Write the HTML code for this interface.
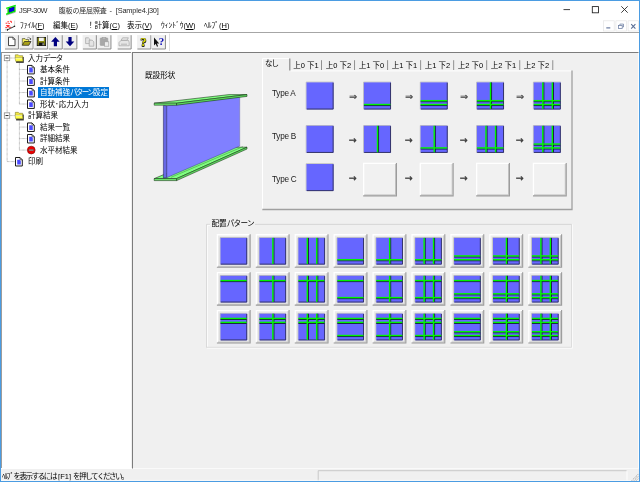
<!DOCTYPE html>
<html lang="ja"><head><meta charset="utf-8"><title>JSP-30W 腹板の座屈照査 - [Sample4.j30]</title>
<style>
*{box-sizing:border-box}
html,body{margin:0;padding:0}
body{width:640px;height:482px;overflow:hidden;background:#fff;position:relative;font-family:"Liberation Sans","Noto Sans CJK JP",sans-serif;font-size:7.5px;color:#000}
.a{position:absolute}
.t{position:absolute;white-space:nowrap;line-height:10px;height:10px;will-change:transform}
svg{position:absolute;left:0;top:0;overflow:visible}
#win{position:absolute;left:0;top:0;width:640px;height:482px;border:1px solid #4b9ce2;background:#fff}
#title{left:1px;top:1px;width:638px;height:19px;background:#fff}
#menu{left:1px;top:20px;width:638px;height:12px;background:#fff}
#menuline{left:1px;top:32px;width:638px;height:1px;background:#a6a6a6}
#tool{left:1px;top:33px;width:638px;height:19px;background:#fff}
#tree{left:1px;top:52px;width:130px;height:416px;background:#fff;border-top:1px solid #8e8e8e;border-left:1px solid #9c9c9c}
#split{left:131px;top:52px;width:2px;height:416px;background:#f0f0f0}
#view{left:132px;top:52px;width:507px;height:417px;background:#f0f0f0;border-top:1px solid #7c7c7c;border-left:1px solid #7c7c7c;border-right:1px solid #fcfcfc;border-bottom:1px solid #fafafa}
#status{left:1px;top:469px;width:638px;height:12px;background:#f0f0f0}
.sel{background:#0078d7;color:#fff}
.arr{font-family:"DejaVu Sans",sans-serif;font-weight:bold;font-size:9.4px;color:#383838;width:10px;text-align:center;-webkit-text-stroke:0.25px #383838}
</style></head>
<body>
<div id="win">
<div class="a" id="root" style="left:-1px;top:-1px;width:640px;height:482px">
<div class="a" id="title"><svg width="20" height="19" viewBox="1 1 20 19"><polygon points="8.9,8.3 14.3,6.6 14.3,11.2 8.9,13.1" fill="#0000e8" stroke="#002800" stroke-width="0.5"/><polygon points="7.5,8.6 8.9,8.2 8.9,13.4 7.5,13.8" fill="#00c800"/><polygon points="14.3,6.4 15.5,6.0 15.5,10.9 14.3,11.3" fill="#00c000"/><polygon points="6.0,7.7 15.6,4.8 15.9,6.0 6.3,9.0" fill="#00ee00"/><polygon points="6.0,13.6 15.4,10.6 15.7,11.8 6.3,14.9" fill="#00ee00"/><path d="M6.4 15.2 L15.6 12.2" stroke="#556" stroke-width="0.4" fill="none"/></svg><div class="t" id="ttl" style="left:17.8px;top:4.8px;font-size:7.4px;color:#2a2a2a"><span style="letter-spacing:-0.45px">JSP-30W</span><span style="letter-spacing:4.2px">　</span><span style="font-size:7px;letter-spacing:-0.14px">腹板の座屈照査</span><span style="letter-spacing:0.85px"> - </span><span style="letter-spacing:-0.18px">[Sample4.j30]</span></div><svg width="638" height="19" viewBox="1 1 638 19" fill="none" stroke="#1c1c1c" stroke-width="0.85"><line x1="563.5" y1="9.6" x2="570" y2="9.6"/><rect x="592.3" y="6.6" width="6.2" height="6.2"/><path d="M621.3 6.3 L627.7 12.7 M627.7 6.3 L621.3 12.7"/></svg></div>
<div class="a" id="menu"><svg width="20" height="12" viewBox="1 20 20 12"><path d="M7.4 21.8 h1.6 M9.9 21.3 h1.5 v1.6 M5.6 23.2 h1.8 M8.4 23.5 h1.4" stroke="#ff3030" stroke-width="1" fill="none"/><path d="M6.2 25.5 h3.4 M7 26.6 h2.2 M5.3 27.4 h2 M8.6 27.3 h2.6" stroke="#ff3030" stroke-width="1" fill="none"/><path d="M14.6 20.6 V25" stroke="#d0d0d0" stroke-width="0.8"/><rect x="5.2" y="28.6" width="2.6" height="1.8" fill="#c8c8c8"/><path d="M7 30 L10.4 28.4 L14.5 26.3" stroke="#1c1c1c" stroke-width="0.9" fill="none"/><circle cx="14.5" cy="26.3" r="0.75" fill="#111"/><rect x="7" y="29" width="1" height="1.6" fill="#222"/></svg><div class="t" style="left:18.5px;top:1.2px">ﾌｧｲﾙ(<u>F</u>)</div><div class="t" style="left:51.5px;top:1.2px">編集(<u>E</u>)</div><div class="t" style="left:86px;top:1.2px">！計算(<u>C</u>)</div><div class="t" style="left:125.5px;top:1.2px">表示(<u>V</u>)</div><div class="t" style="left:159.5px;top:1.2px">ｳｨﾝﾄﾞｳ(<u>W</u>)</div><div class="t" style="left:203.3px;top:1.2px">ﾍﾙﾌﾟ(<u>H</u>)</div><svg width="638" height="12" viewBox="1 20 638 12"><g fill="#fff" stroke="#e4e4e4" stroke-width="0.7"><rect x="603.6" y="20.8" width="10.6" height="10.2"/><rect x="615.9" y="20.8" width="10.6" height="10.2"/><rect x="628.1" y="20.8" width="10.4" height="10.2"/></g><g fill="none" stroke="#5b6f96" stroke-width="0.9"><line x1="606.3" y1="27.9" x2="610.3" y2="27.9" stroke-width="1.1"/><rect x="618.6" y="25.6" width="3.6" height="2.9" stroke="#6c7ea2" stroke-width="0.75"/><path d="M619.9 25.4 V24.1 H623.5 V27 H622.4" stroke="#6c7ea2" stroke-width="0.75"/><path d="M631.2 24.2 L635.4 28.6 M635.4 24.2 L631.2 28.6" stroke-width="1.1"/></g></svg></div>
<div class="a" id="menuline"></div>
<div class="a" id="tool"><svg width="170" height="19" viewBox="1 33 170 19"><rect class="tbb" x="4.7" y="35" width="13.5" height="13.6" fill="#f0f0f0"/><path d="M18.45 35.2 V49 H5" stroke="#858585" stroke-width="0.95" fill="none"/><rect class="tbb" x="19.3" y="35" width="13.5" height="13.6" fill="#f0f0f0"/><path d="M33.05 35.2 V49 H19.6" stroke="#858585" stroke-width="0.95" fill="none"/><rect class="tbb" x="33.9" y="35" width="13.5" height="13.6" fill="#f0f0f0"/><path d="M47.65 35.2 V49 H34.2" stroke="#858585" stroke-width="0.95" fill="none"/><rect class="tbb" x="48.5" y="35" width="13.5" height="13.6" fill="#f0f0f0"/><path d="M62.25 35.2 V49 H48.8" stroke="#858585" stroke-width="0.95" fill="none"/><rect class="tbb" x="63.1" y="35" width="13.5" height="13.6" fill="#f0f0f0"/><path d="M76.85 35.2 V49 H63.4" stroke="#858585" stroke-width="0.95" fill="none"/><rect class="tbb" x="82.6" y="35" width="13.5" height="13.6" fill="#f0f0f0"/><path d="M96.35 35.2 V49 H82.9" stroke="#858585" stroke-width="0.95" fill="none"/><rect class="tbb" x="97.2" y="35" width="13.5" height="13.6" fill="#f0f0f0"/><path d="M110.95 35.2 V49 H97.5" stroke="#858585" stroke-width="0.95" fill="none"/><rect class="tbb" x="117.4" y="35" width="13.5" height="13.6" fill="#f0f0f0"/><path d="M131.15 35.2 V49 H117.7" stroke="#858585" stroke-width="0.95" fill="none"/><rect class="tbb" x="137.1" y="35" width="13.5" height="13.6" fill="#f0f0f0"/><path d="M150.85 35.2 V49 H137.4" stroke="#858585" stroke-width="0.95" fill="none"/><rect class="tbb" x="151.7" y="35" width="13.5" height="13.6" fill="#f0f0f0"/><path d="M165.45 35.2 V49 H152" stroke="#858585" stroke-width="0.95" fill="none"/><path d="M169.5 33.5 V51" stroke="#dcdcdc" stroke-width="0.9"/><path d="M8.5 37.2 H12.9 L15 39.3 V45.6 H8.5 Z" fill="#fff" stroke="#1c1c1c" stroke-width="0.8"/><path d="M12.9 37.2 V39.3 H15" fill="none" stroke="#1c1c1c" stroke-width="0.6"/><path d="M22.3 45.2 V38.6 H25 L25.8 39.5 H28.6 V41.4" fill="#f4ee60" stroke="#333" stroke-width="0.6"/><path d="M22.3 45.3 L24.4 41.5 H31 L28.8 45.3 Z" fill="#a8a018" stroke="#1c1c1c" stroke-width="0.7"/><path d="M27.2 38 q1.6 -1.3 2.8 0.1" fill="none" stroke="#444" stroke-width="0.5"/><circle cx="30.4" cy="39" r="0.8" fill="#111"/><rect x="37.2" y="37.4" width="8.4" height="8.2" fill="#8c8c10" stroke="#111" stroke-width="0.8"/><rect x="39" y="37.7" width="4.8" height="3.3" fill="#f4f4f4"/><rect x="38.8" y="42.6" width="5.4" height="3" fill="#111"/><rect x="42.6" y="43.2" width="1" height="2" fill="#ddd"/><path d="M55.4 37 L59.7 41.7 H57 V46.2 H53.8 V41.7 H51.1 Z" fill="#000080"/><path d="M70 46.2 L74.3 41.5 H71.6 V37 H68.4 V41.5 H65.7 Z" fill="#000080"/><g fill="#e4e4e4" stroke="#a4a4a4" stroke-width="0.7"><path d="M85.6 37.8 h2.8 l1.4 1.4 v4.4 h-4.2 Z"/><path d="M89.2 40.2 h3 l1.6 1.6 v4.4 h-4.6 Z"/></g><g stroke="#9c9c9c" stroke-width="0.6"><rect x="100.2" y="38" width="7.6" height="7.4" rx="0.6" fill="#a8a8a8"/><rect x="102.2" y="37.4" width="3.6" height="1.5" fill="#d0d0d0"/><rect x="104.6" y="41.8" width="4.2" height="4.4" fill="#ececec"/></g><g stroke="#a4a4a4" stroke-width="0.7" fill="#e6e6e6"><path d="M121 40.4 L122.6 37.8 H128.4 L126.8 40.4 Z"/><path d="M119 42.6 L121 40.4 H128.6 L129.2 42.6 V45.8 H119 Z"/><path d="M121 44.2 H127" fill="none"/></g><path d="M154 37.6 V45.4 L155.7 43.8 L157 46.8 L158.1 46.3 L156.9 43.4 H159.2 Z" fill="#111"/></svg><div class="t" style="left:139.4px;top:2.6px;font-family:'Liberation Serif',serif;font-size:12px;font-weight:bold;color:#dcdc00;line-height:12px;height:12px;width:7px;text-align:center;text-shadow:0.5px 0.5px 0 #222,-0.4px -0.4px 0 #333,0.5px -0.4px 0 #333,-0.4px 0.5px 0 #333">?</div><div class="t" style="left:157.4px;top:2.4px;font-family:'Liberation Serif',serif;font-size:11px;font-weight:bold;color:#0808b8;line-height:12px;height:12px;width:7px;text-align:center">?</div></div>
<div class="a" id="tree"></div>
<div class="a" id="treeitems" style="left:0;top:52px;width:131px;height:416px"><svg width="131" height="416" viewBox="0 52 131 416"><g stroke="#989898" stroke-width="0.8" stroke-dasharray="0.7 0.56" fill="none"><path d="M7.1 61 V161.59"/><path d="M10 58 H15 M10 115.55 H15 M7.1 161.59 H15.5"/><path d="M19.4 63 V104.04 M19.4 120.55 V150.08"/><path d="M19.4 69.51 H27"/><path d="M19.4 81.02 H27"/><path d="M19.4 92.53 H27"/><path d="M19.4 104.04 H27"/><path d="M19.4 127.06 H27"/><path d="M19.4 138.57 H27"/><path d="M19.4 150.08 H27"/></g><rect x="4.3" y="55.3" width="5.4" height="5.4" fill="#fff" stroke="#8a8a8a" stroke-width="0.8"/><path d="M5.5 58 H8.5" stroke="#1c1c1c" stroke-width="0.95"/><rect x="16.1" y="57" width="7.7" height="5.9" fill="#3a3a3a"/><path d="M15.3 58 v-3.2 h3 l.9 .9 h3.5 v2.3 Z" fill="#f2e840" stroke="#6a6420" stroke-width="0.5"/><path d="M15.1 57.7 h7.4 l.5 3.6 h-7.4 Z" fill="#ffff48" stroke="#7a7420" stroke-width="0.45"/><path d="M15.5 58.1 h6.6" stroke="#fffff0" stroke-width="0.7"/><path d="M27.5 65.41 h4.5 l2.3 2.3 v6.2 h-6.8 Z" fill="#fff" stroke="#1c1c1c" stroke-width="1" stroke-linejoin="miter"/><path d="M32 65.41 v2.3 h2.3" fill="none" stroke="#1c1c1c" stroke-width="0.6"/><path d="M29.2 67.61 h2.4 l1.2 1.2 v3.6 h-3.6 Z" fill="#4a4aff"/><path d="M27.5 76.92 h4.5 l2.3 2.3 v6.2 h-6.8 Z" fill="#fff" stroke="#1c1c1c" stroke-width="1" stroke-linejoin="miter"/><path d="M32 76.92 v2.3 h2.3" fill="none" stroke="#1c1c1c" stroke-width="0.6"/><path d="M29.2 79.12 h2.4 l1.2 1.2 v3.6 h-3.6 Z" fill="#4a4aff"/><path d="M27.5 88.43 h4.5 l2.3 2.3 v6.2 h-6.8 Z" fill="#fff" stroke="#1c1c1c" stroke-width="1" stroke-linejoin="miter"/><path d="M32 88.43 v2.3 h2.3" fill="none" stroke="#1c1c1c" stroke-width="0.6"/><path d="M29.2 90.63 h2.4 l1.2 1.2 v3.6 h-3.6 Z" fill="#4a4aff"/><path d="M27.5 99.94 h4.5 l2.3 2.3 v6.2 h-6.8 Z" fill="#fff" stroke="#1c1c1c" stroke-width="1" stroke-linejoin="miter"/><path d="M32 99.94 v2.3 h2.3" fill="none" stroke="#1c1c1c" stroke-width="0.6"/><path d="M29.2 102.14 h2.4 l1.2 1.2 v3.6 h-3.6 Z" fill="#4a4aff"/><rect x="4.3" y="112.85" width="5.4" height="5.4" fill="#fff" stroke="#8a8a8a" stroke-width="0.8"/><path d="M5.5 115.55 H8.5" stroke="#1c1c1c" stroke-width="0.95"/><rect x="16.1" y="114.55" width="7.7" height="5.9" fill="#3a3a3a"/><path d="M15.3 115.55 v-3.2 h3 l.9 .9 h3.5 v2.3 Z" fill="#f2e840" stroke="#6a6420" stroke-width="0.5"/><path d="M15.1 115.25 h7.4 l.5 3.6 h-7.4 Z" fill="#ffff48" stroke="#7a7420" stroke-width="0.45"/><path d="M15.5 115.65 h6.6" stroke="#fffff0" stroke-width="0.7"/><path d="M27.5 122.96 h4.5 l2.3 2.3 v6.2 h-6.8 Z" fill="#fff" stroke="#1c1c1c" stroke-width="1" stroke-linejoin="miter"/><path d="M32 122.96 v2.3 h2.3" fill="none" stroke="#1c1c1c" stroke-width="0.6"/><path d="M29.2 125.16 h2.4 l1.2 1.2 v3.6 h-3.6 Z" fill="#4a4aff"/><path d="M27.5 134.47 h4.5 l2.3 2.3 v6.2 h-6.8 Z" fill="#fff" stroke="#1c1c1c" stroke-width="1" stroke-linejoin="miter"/><path d="M32 134.47 v2.3 h2.3" fill="none" stroke="#1c1c1c" stroke-width="0.6"/><path d="M29.2 136.67 h2.4 l1.2 1.2 v3.6 h-3.6 Z" fill="#4a4aff"/><circle cx="31.25" cy="150.08" r="3.9" fill="#f00000" stroke="#7a0000" stroke-width="0.6"/><rect x="28.9" y="149.28" width="4.7" height="1.6" fill="#a8b4b4" stroke="#602020" stroke-width="0.4"/><path d="M15.5 157.49 h4.5 l2.3 2.3 v6.2 h-6.8 Z" fill="#fff" stroke="#1c1c1c" stroke-width="1" stroke-linejoin="miter"/><path d="M20 157.49 v2.3 h2.3" fill="none" stroke="#1c1c1c" stroke-width="0.6"/><path d="M17.2 159.69 h2.4 l1.2 1.2 v3.6 h-3.6 Z" fill="#4a4aff"/></svg><div class="t" style="left:27.8px;top:1.6px">入力<span style="letter-spacing:-1.1px">データ</span></div><div class="t" style="left:39.8px;top:13.11px">基本条件</div><div class="t" style="left:39.8px;top:24.62px">計算条件</div><div class="a sel" style="left:38.3px;top:35.43px;width:71px;height:10.9px"></div><div class="t" style="left:39.8px;top:36.13px;color:#fff">自動補強<span style="letter-spacing:-1.65px">パターン</span>設定</div><div class="t" style="left:39.8px;top:47.64px">形状･応力入力</div><div class="t" style="left:27.8px;top:59.15px">計算結果</div><div class="t" style="left:39.8px;top:70.66px">結果一覧</div><div class="t" style="left:39.8px;top:82.17px">詳細結果</div><div class="t" style="left:39.8px;top:93.68px">水平材結果</div><div class="t" style="left:27.8px;top:105.19px">印刷</div></div>
<div class="a" id="split"></div>
<div class="a" id="view"></div>
<div class="a" id="viewc" style="left:0;top:0;width:640px;height:482px"><div class="t" style="left:144.6px;top:71.1px;font-size:7.6px">既設形状</div><svg width="640" height="482" viewBox="0 0 640 482"><g stroke="#102810" stroke-width="0.55" stroke-linejoin="round"><polygon points="154.2,178.6 176.6,178.6 247,147.2 229,147.2" fill="#80ff80"/><polygon points="154.2,178.6 176.6,178.6 176.6,180.6 154.2,180.6" fill="#70ee70"/><polygon points="176.6,178.6 247,147.2 247,149 176.6,180.6" fill="#60e060"/><path d="M171 177.3 L243 146.6" stroke="#3a8a3a" stroke-width="0.5" fill="none"/></g><polygon points="163.4,105.4 166.8,105.8 166.8,177.6 163.4,177.9" fill="#6868e4" stroke="#181850" stroke-width="0.5"/><polygon points="166.8,105.8 239.8,96.6 239.8,146 166.8,177.6" fill="#8080ff" stroke="#303078" stroke-width="0.45"/><path d="M240.2 97 V146" stroke="#fafafa" stroke-width="0.5"/><g stroke="#102810" stroke-width="0.55" stroke-linejoin="round"><polygon points="154.2,103.2 176.6,103.2 247,94.6 229,94.6" fill="#80ff80"/><polygon points="154.2,103.2 176.6,103.2 176.6,105.2 154.2,105.2" fill="#70ee70"/><polygon points="176.6,103.2 247,94.6 247,96.4 176.6,105.2" fill="#60e060"/></g></svg><svg width="640" height="482" viewBox="0 0 640 482" fill="none"><path d="M262.5 209.6 V58.6 H289" stroke="#fff" stroke-width="1"/><path d="M290.5 70.9 H571.5" stroke="#fff" stroke-width="1"/><path d="M572 70.4 V209.5 H262.3" stroke="#a0a0a0" stroke-width="1.3"/><path d="M289.8 58.6 V70.6" stroke="#8a8a8a" stroke-width="1.2"/><path d="M321.5 60.2 V70" stroke="#909090" stroke-width="1"/><path d="M354.54 60.2 V70" stroke="#909090" stroke-width="1"/><path d="M387.58 60.2 V70" stroke="#909090" stroke-width="1"/><path d="M420.62 60.2 V70" stroke="#909090" stroke-width="1"/><path d="M453.66 60.2 V70" stroke="#909090" stroke-width="1"/><path d="M486.7 60.2 V70" stroke="#909090" stroke-width="1"/><path d="M519.74 60.2 V70" stroke="#909090" stroke-width="1"/><path d="M552.78 60.2 V70" stroke="#909090" stroke-width="1"/></svg><div class="t" style="left:265.2px;top:59px;letter-spacing:-0.95px">なし</div><div class="t" style="left:289.6px;top:60.7px;width:31.9px;text-align:center">上0 下1</div><div class="t" style="left:321.5px;top:60.7px;width:33.04px;text-align:center">上0 下2</div><div class="t" style="left:354.54px;top:60.7px;width:33.04px;text-align:center">上1 下0</div><div class="t" style="left:387.58px;top:60.7px;width:33.04px;text-align:center">上1 下1</div><div class="t" style="left:420.62px;top:60.7px;width:33.04px;text-align:center">上1 下2</div><div class="t" style="left:453.66px;top:60.7px;width:33.04px;text-align:center">上2 下0</div><div class="t" style="left:486.7px;top:60.7px;width:33.04px;text-align:center">上2 下1</div><div class="t" style="left:519.74px;top:60.7px;width:33.04px;text-align:center">上2 下2</div><svg width="640" height="482" viewBox="0 0 640 482"><path d="M306.2 109.4 V82.1 H333.5" stroke="#b4b4b4" stroke-width="0.8" fill="none"/><rect x="306.5" y="82.4" width="27" height="27" fill="#6666ff"/><path d="M333.15 82.7 V109.05 H306.8" stroke="#2c2c58" stroke-width="0.9" fill="none"/><path d="M363.6 109.4 V82.1 H390.9" stroke="#b4b4b4" stroke-width="0.8" fill="none"/><rect x="363.9" y="82.4" width="27" height="27" fill="#6666ff"/><path d="M390.55 82.7 V109.05 H364.2" stroke="#2c2c58" stroke-width="0.9" fill="none"/><rect x="363.9" y="105.111" width="26.5" height="0.95" fill="#141438"/><rect x="363.9" y="103.811" width="26.5" height="1.4" fill="#00f400"/><path d="M420.3 109.4 V82.1 H447.6" stroke="#b4b4b4" stroke-width="0.8" fill="none"/><rect x="420.6" y="82.4" width="27" height="27" fill="#6666ff"/><path d="M447.25 82.7 V109.05 H420.9" stroke="#2c2c58" stroke-width="0.9" fill="none"/><rect x="420.6" y="101.25" width="26.5" height="0.95" fill="#141438"/><rect x="420.6" y="105.111" width="26.5" height="0.95" fill="#141438"/><rect x="420.6" y="99.95" width="26.5" height="1.4" fill="#00f400"/><rect x="420.6" y="103.811" width="26.5" height="1.4" fill="#00f400"/><path d="M476.6 109.4 V82.1 H503.9" stroke="#b4b4b4" stroke-width="0.8" fill="none"/><rect x="476.9" y="82.4" width="27" height="27" fill="#6666ff"/><path d="M503.55 82.7 V109.05 H477.2" stroke="#2c2c58" stroke-width="0.9" fill="none"/><rect x="476.9" y="101.25" width="26.5" height="0.95" fill="#141438"/><rect x="476.9" y="105.111" width="26.5" height="0.95" fill="#141438"/><rect x="491.106" y="82.4" width="0.95" height="26.5" fill="#141438"/><rect x="476.9" y="99.95" width="26.5" height="1.4" fill="#00f400"/><rect x="476.9" y="103.811" width="26.5" height="1.4" fill="#00f400"/><rect x="489.806" y="82.4" width="1.4" height="26.5" fill="#00f400"/><path d="M533.4 109.4 V82.1 H560.7" stroke="#b4b4b4" stroke-width="0.8" fill="none"/><rect x="533.7" y="82.4" width="27" height="27" fill="#6666ff"/><path d="M560.35 82.7 V109.05 H534" stroke="#2c2c58" stroke-width="0.9" fill="none"/><rect x="533.7" y="101.25" width="26.5" height="0.95" fill="#141438"/><rect x="533.7" y="105.111" width="26.5" height="0.95" fill="#141438"/><rect x="543.37" y="82.4" width="0.95" height="26.5" fill="#141438"/><rect x="552.955" y="82.4" width="0.95" height="26.5" fill="#141438"/><rect x="533.7" y="99.95" width="26.5" height="1.4" fill="#00f400"/><rect x="533.7" y="103.811" width="26.5" height="1.4" fill="#00f400"/><rect x="542.07" y="82.4" width="1.4" height="26.5" fill="#00f400"/><rect x="551.655" y="82.4" width="1.4" height="26.5" fill="#00f400"/><path d="M306.2 152.8 V125.5 H333.5" stroke="#b4b4b4" stroke-width="0.8" fill="none"/><rect x="306.5" y="125.8" width="27" height="27" fill="#6666ff"/><path d="M333.15 126.1 V152.45 H306.8" stroke="#2c2c58" stroke-width="0.9" fill="none"/><path d="M363.6 152.8 V125.5 H390.9" stroke="#b4b4b4" stroke-width="0.8" fill="none"/><rect x="363.9" y="125.8" width="27" height="27" fill="#6666ff"/><path d="M390.55 126.1 V152.45 H364.2" stroke="#2c2c58" stroke-width="0.9" fill="none"/><rect x="378.106" y="125.8" width="0.95" height="26.5" fill="#141438"/><rect x="376.806" y="125.8" width="1.4" height="26.5" fill="#00f400"/><path d="M420.3 152.8 V125.5 H447.6" stroke="#b4b4b4" stroke-width="0.8" fill="none"/><rect x="420.6" y="125.8" width="27" height="27" fill="#6666ff"/><path d="M447.25 126.1 V152.45 H420.9" stroke="#2c2c58" stroke-width="0.9" fill="none"/><rect x="420.6" y="148.511" width="26.5" height="0.95" fill="#141438"/><rect x="434.806" y="125.8" width="0.95" height="26.5" fill="#141438"/><rect x="420.6" y="147.211" width="26.5" height="1.4" fill="#00f400"/><rect x="433.506" y="125.8" width="1.4" height="26.5" fill="#00f400"/><path d="M476.6 152.8 V125.5 H503.9" stroke="#b4b4b4" stroke-width="0.8" fill="none"/><rect x="476.9" y="125.8" width="27" height="27" fill="#6666ff"/><path d="M503.55 126.1 V152.45 H477.2" stroke="#2c2c58" stroke-width="0.9" fill="none"/><rect x="476.9" y="148.511" width="26.5" height="0.95" fill="#141438"/><rect x="486.57" y="125.8" width="0.95" height="26.5" fill="#141438"/><rect x="496.155" y="125.8" width="0.95" height="26.5" fill="#141438"/><rect x="476.9" y="147.211" width="26.5" height="1.4" fill="#00f400"/><rect x="485.27" y="125.8" width="1.4" height="26.5" fill="#00f400"/><rect x="494.855" y="125.8" width="1.4" height="26.5" fill="#00f400"/><path d="M533.4 152.8 V125.5 H560.7" stroke="#b4b4b4" stroke-width="0.8" fill="none"/><rect x="533.7" y="125.8" width="27" height="27" fill="#6666ff"/><path d="M560.35 126.1 V152.45 H534" stroke="#2c2c58" stroke-width="0.9" fill="none"/><rect x="533.7" y="144.65" width="26.5" height="0.95" fill="#141438"/><rect x="533.7" y="148.511" width="26.5" height="0.95" fill="#141438"/><rect x="543.37" y="125.8" width="0.95" height="26.5" fill="#141438"/><rect x="552.955" y="125.8" width="0.95" height="26.5" fill="#141438"/><rect x="533.7" y="143.35" width="26.5" height="1.4" fill="#00f400"/><rect x="533.7" y="147.211" width="26.5" height="1.4" fill="#00f400"/><rect x="542.07" y="125.8" width="1.4" height="26.5" fill="#00f400"/><rect x="551.655" y="125.8" width="1.4" height="26.5" fill="#00f400"/><path d="M306.2 191 V163.7 H333.5" stroke="#b4b4b4" stroke-width="0.8" fill="none"/><rect x="306.5" y="164" width="27" height="27" fill="#6666ff"/><path d="M333.15 164.3 V190.65 H306.8" stroke="#2c2c58" stroke-width="0.9" fill="none"/><rect x="363" y="162.7" width="34" height="33.7" fill="#f1f1f1"/><path d="M363.65 195.4 V163.35 H396" stroke="#fff" stroke-width="1.3" fill="none"/><path d="M395.5 163.9 V194.9 H364.2" stroke="#c4c4c4" stroke-width="1" fill="none"/><path d="M396.45 162.9 V195.85 H363.2" stroke="#9c9c9c" stroke-width="1.1" fill="none"/><rect x="419.7" y="162.7" width="34" height="33.7" fill="#f1f1f1"/><path d="M420.35 195.4 V163.35 H452.7" stroke="#fff" stroke-width="1.3" fill="none"/><path d="M452.2 163.9 V194.9 H420.9" stroke="#c4c4c4" stroke-width="1" fill="none"/><path d="M453.15 162.9 V195.85 H419.9" stroke="#9c9c9c" stroke-width="1.1" fill="none"/><rect x="476" y="162.7" width="34" height="33.7" fill="#f1f1f1"/><path d="M476.65 195.4 V163.35 H509" stroke="#fff" stroke-width="1.3" fill="none"/><path d="M508.5 163.9 V194.9 H477.2" stroke="#c4c4c4" stroke-width="1" fill="none"/><path d="M509.45 162.9 V195.85 H476.2" stroke="#9c9c9c" stroke-width="1.1" fill="none"/><rect x="532.8" y="162.7" width="34" height="33.7" fill="#f1f1f1"/><path d="M533.45 195.4 V163.35 H565.8" stroke="#fff" stroke-width="1.3" fill="none"/><path d="M565.3 163.9 V194.9 H534" stroke="#c4c4c4" stroke-width="1" fill="none"/><path d="M566.25 162.9 V195.85 H533" stroke="#9c9c9c" stroke-width="1.1" fill="none"/></svg><div class="t" style="left:272.4px;top:89.2px;font-size:8.2px;letter-spacing:-0.25px;color:#1c1c1c">Type A</div><div class="t arr" style="left:348.1px;top:92.4px;font-size:9.8px;-webkit-text-stroke:0">⇒</div><div class="t arr" style="left:403.6px;top:92.4px;font-size:9.8px;-webkit-text-stroke:0">⇒</div><div class="t arr" style="left:459.1px;top:92.4px;font-size:9.8px;-webkit-text-stroke:0">⇒</div><div class="t arr" style="left:514.6px;top:92.4px;font-size:9.8px;-webkit-text-stroke:0">⇒</div><div class="t" style="left:272.4px;top:132.4px;font-size:8.2px;letter-spacing:-0.25px;color:#1c1c1c">Type B</div><div class="t arr" style="left:348.1px;top:135.1px">→</div><div class="t arr" style="left:403.6px;top:135.1px">→</div><div class="t arr" style="left:459.1px;top:135.1px">→</div><div class="t arr" style="left:514.6px;top:135.1px">→</div><div class="t" style="left:272.4px;top:175.2px;font-size:8.2px;letter-spacing:-0.25px;color:#1c1c1c">Type C</div><div class="t arr" style="left:348.1px;top:173.1px">→</div><div class="t arr" style="left:403.6px;top:173.1px">→</div><div class="t arr" style="left:459.1px;top:173.1px">→</div><div class="t arr" style="left:514.6px;top:173.1px">→</div><svg width="640" height="482" viewBox="0 0 640 482" fill="none"><path d="M210 224.4 H206.5 V347.4 H571.6 V224.4 H255" stroke="#d4d4d4" stroke-width="0.9"/><path d="M210 225.3 H207.4 V346.6 M207 348.2 H572.4 V224.4" stroke="#fff" stroke-width="0.8"/><rect x="216.7" y="234.1" width="34" height="33.7" fill="#ebebeb"/><path d="M217.35 266.8 V234.75 H249.7" stroke="#fff" stroke-width="1.3" fill="none"/><path d="M249.2 235.3 V266.3 H217.9" stroke="#c4c4c4" stroke-width="1" fill="none"/><path d="M250.15 234.3 V267.25 H216.9" stroke="#9c9c9c" stroke-width="1.1" fill="none"/><path d="M220.2 264.5 V237.6 H247.1" stroke="#b4b4b4" stroke-width="0.8" fill="none"/><rect x="220.5" y="237.9" width="26.6" height="26.6" fill="#6666ff"/><path d="M246.75 238.2 V264.15 H220.8" stroke="#2c2c58" stroke-width="0.9" fill="none"/><rect x="255.63" y="234.1" width="34" height="33.7" fill="#ebebeb"/><path d="M256.28 266.8 V234.75 H288.63" stroke="#fff" stroke-width="1.3" fill="none"/><path d="M288.13 235.3 V266.3 H256.83" stroke="#c4c4c4" stroke-width="1" fill="none"/><path d="M289.08 234.3 V267.25 H255.83" stroke="#9c9c9c" stroke-width="1.1" fill="none"/><path d="M259.13 264.5 V237.6 H286.03" stroke="#b4b4b4" stroke-width="0.8" fill="none"/><rect x="259.43" y="237.9" width="26.6" height="26.6" fill="#6666ff"/><path d="M285.68 238.2 V264.15 H259.73" stroke="#2c2c58" stroke-width="0.9" fill="none"/><rect x="273.445" y="237.9" width="0.95" height="26.1" fill="#141438"/><rect x="272.145" y="237.9" width="1.4" height="26.1" fill="#00f400"/><rect x="294.56" y="234.1" width="34" height="33.7" fill="#ebebeb"/><path d="M295.21 266.8 V234.75 H327.56" stroke="#fff" stroke-width="1.3" fill="none"/><path d="M327.06 235.3 V266.3 H295.76" stroke="#c4c4c4" stroke-width="1" fill="none"/><path d="M328.01 234.3 V267.25 H294.76" stroke="#9c9c9c" stroke-width="1.1" fill="none"/><path d="M298.06 264.5 V237.6 H324.96" stroke="#b4b4b4" stroke-width="0.8" fill="none"/><rect x="298.36" y="237.9" width="26.6" height="26.6" fill="#6666ff"/><path d="M324.61 238.2 V264.15 H298.66" stroke="#2c2c58" stroke-width="0.9" fill="none"/><rect x="307.906" y="237.9" width="0.95" height="26.1" fill="#141438"/><rect x="317.349" y="237.9" width="0.95" height="26.1" fill="#141438"/><rect x="306.606" y="237.9" width="1.4" height="26.1" fill="#00f400"/><rect x="316.049" y="237.9" width="1.4" height="26.1" fill="#00f400"/><rect x="333.49" y="234.1" width="34" height="33.7" fill="#ebebeb"/><path d="M334.14 266.8 V234.75 H366.49" stroke="#fff" stroke-width="1.3" fill="none"/><path d="M365.99 235.3 V266.3 H334.69" stroke="#c4c4c4" stroke-width="1" fill="none"/><path d="M366.94 234.3 V267.25 H333.69" stroke="#9c9c9c" stroke-width="1.1" fill="none"/><path d="M336.99 264.5 V237.6 H363.89" stroke="#b4b4b4" stroke-width="0.8" fill="none"/><rect x="337.29" y="237.9" width="26.6" height="26.6" fill="#6666ff"/><path d="M363.54 238.2 V264.15 H337.59" stroke="#2c2c58" stroke-width="0.9" fill="none"/><rect x="337.29" y="260.294" width="26.1" height="0.95" fill="#141438"/><rect x="337.29" y="258.994" width="26.1" height="1.4" fill="#00f400"/><rect x="372.42" y="234.1" width="34" height="33.7" fill="#ebebeb"/><path d="M373.07 266.8 V234.75 H405.42" stroke="#fff" stroke-width="1.3" fill="none"/><path d="M404.92 235.3 V266.3 H373.62" stroke="#c4c4c4" stroke-width="1" fill="none"/><path d="M405.87 234.3 V267.25 H372.62" stroke="#9c9c9c" stroke-width="1.1" fill="none"/><path d="M375.92 264.5 V237.6 H402.82" stroke="#b4b4b4" stroke-width="0.8" fill="none"/><rect x="376.22" y="237.9" width="26.6" height="26.6" fill="#6666ff"/><path d="M402.47 238.2 V264.15 H376.52" stroke="#2c2c58" stroke-width="0.9" fill="none"/><rect x="376.22" y="260.294" width="26.1" height="0.95" fill="#141438"/><rect x="390.235" y="237.9" width="0.95" height="26.1" fill="#141438"/><rect x="376.22" y="258.994" width="26.1" height="1.4" fill="#00f400"/><rect x="388.935" y="237.9" width="1.4" height="26.1" fill="#00f400"/><rect x="411.35" y="234.1" width="34" height="33.7" fill="#ebebeb"/><path d="M412 266.8 V234.75 H444.35" stroke="#fff" stroke-width="1.3" fill="none"/><path d="M443.85 235.3 V266.3 H412.55" stroke="#c4c4c4" stroke-width="1" fill="none"/><path d="M444.8 234.3 V267.25 H411.55" stroke="#9c9c9c" stroke-width="1.1" fill="none"/><path d="M414.85 264.5 V237.6 H441.75" stroke="#b4b4b4" stroke-width="0.8" fill="none"/><rect x="415.15" y="237.9" width="26.6" height="26.6" fill="#6666ff"/><path d="M441.4 238.2 V264.15 H415.45" stroke="#2c2c58" stroke-width="0.9" fill="none"/><rect x="415.15" y="260.294" width="26.1" height="0.95" fill="#141438"/><rect x="424.696" y="237.9" width="0.95" height="26.1" fill="#141438"/><rect x="434.139" y="237.9" width="0.95" height="26.1" fill="#141438"/><rect x="415.15" y="258.994" width="26.1" height="1.4" fill="#00f400"/><rect x="423.396" y="237.9" width="1.4" height="26.1" fill="#00f400"/><rect x="432.839" y="237.9" width="1.4" height="26.1" fill="#00f400"/><rect x="450.28" y="234.1" width="34" height="33.7" fill="#ebebeb"/><path d="M450.93 266.8 V234.75 H483.28" stroke="#fff" stroke-width="1.3" fill="none"/><path d="M482.78 235.3 V266.3 H451.48" stroke="#c4c4c4" stroke-width="1" fill="none"/><path d="M483.73 234.3 V267.25 H450.48" stroke="#9c9c9c" stroke-width="1.1" fill="none"/><path d="M453.78 264.5 V237.6 H480.68" stroke="#b4b4b4" stroke-width="0.8" fill="none"/><rect x="454.08" y="237.9" width="26.6" height="26.6" fill="#6666ff"/><path d="M480.33 238.2 V264.15 H454.38" stroke="#2c2c58" stroke-width="0.9" fill="none"/><rect x="454.08" y="256.49" width="26.1" height="0.95" fill="#141438"/><rect x="454.08" y="260.294" width="26.1" height="0.95" fill="#141438"/><rect x="454.08" y="255.19" width="26.1" height="1.4" fill="#00f400"/><rect x="454.08" y="258.994" width="26.1" height="1.4" fill="#00f400"/><rect x="489.21" y="234.1" width="34" height="33.7" fill="#ebebeb"/><path d="M489.86 266.8 V234.75 H522.21" stroke="#fff" stroke-width="1.3" fill="none"/><path d="M521.71 235.3 V266.3 H490.41" stroke="#c4c4c4" stroke-width="1" fill="none"/><path d="M522.66 234.3 V267.25 H489.41" stroke="#9c9c9c" stroke-width="1.1" fill="none"/><path d="M492.71 264.5 V237.6 H519.61" stroke="#b4b4b4" stroke-width="0.8" fill="none"/><rect x="493.01" y="237.9" width="26.6" height="26.6" fill="#6666ff"/><path d="M519.26 238.2 V264.15 H493.31" stroke="#2c2c58" stroke-width="0.9" fill="none"/><rect x="493.01" y="256.49" width="26.1" height="0.95" fill="#141438"/><rect x="493.01" y="260.294" width="26.1" height="0.95" fill="#141438"/><rect x="507.025" y="237.9" width="0.95" height="26.1" fill="#141438"/><rect x="493.01" y="255.19" width="26.1" height="1.4" fill="#00f400"/><rect x="493.01" y="258.994" width="26.1" height="1.4" fill="#00f400"/><rect x="505.725" y="237.9" width="1.4" height="26.1" fill="#00f400"/><rect x="528.14" y="234.1" width="34" height="33.7" fill="#ebebeb"/><path d="M528.79 266.8 V234.75 H561.14" stroke="#fff" stroke-width="1.3" fill="none"/><path d="M560.64 235.3 V266.3 H529.34" stroke="#c4c4c4" stroke-width="1" fill="none"/><path d="M561.59 234.3 V267.25 H528.34" stroke="#9c9c9c" stroke-width="1.1" fill="none"/><path d="M531.64 264.5 V237.6 H558.54" stroke="#b4b4b4" stroke-width="0.8" fill="none"/><rect x="531.94" y="237.9" width="26.6" height="26.6" fill="#6666ff"/><path d="M558.19 238.2 V264.15 H532.24" stroke="#2c2c58" stroke-width="0.9" fill="none"/><rect x="531.94" y="256.49" width="26.1" height="0.95" fill="#141438"/><rect x="531.94" y="260.294" width="26.1" height="0.95" fill="#141438"/><rect x="541.486" y="237.9" width="0.95" height="26.1" fill="#141438"/><rect x="550.929" y="237.9" width="0.95" height="26.1" fill="#141438"/><rect x="531.94" y="255.19" width="26.1" height="1.4" fill="#00f400"/><rect x="531.94" y="258.994" width="26.1" height="1.4" fill="#00f400"/><rect x="540.186" y="237.9" width="1.4" height="26.1" fill="#00f400"/><rect x="549.629" y="237.9" width="1.4" height="26.1" fill="#00f400"/><rect x="216.7" y="272" width="34" height="33.7" fill="#ebebeb"/><path d="M217.35 304.7 V272.65 H249.7" stroke="#fff" stroke-width="1.3" fill="none"/><path d="M249.2 273.2 V304.2 H217.9" stroke="#c4c4c4" stroke-width="1" fill="none"/><path d="M250.15 272.2 V305.15 H216.9" stroke="#9c9c9c" stroke-width="1.1" fill="none"/><path d="M220.2 302.4 V275.5 H247.1" stroke="#b4b4b4" stroke-width="0.8" fill="none"/><rect x="220.5" y="275.8" width="26.6" height="26.6" fill="#6666ff"/><path d="M246.75 276.1 V302.05 H220.8" stroke="#2c2c58" stroke-width="0.9" fill="none"/><rect x="220.5" y="281.143" width="26.1" height="0.95" fill="#141438"/><rect x="220.5" y="279.843" width="26.1" height="1.4" fill="#00f400"/><rect x="255.63" y="272" width="34" height="33.7" fill="#ebebeb"/><path d="M256.28 304.7 V272.65 H288.63" stroke="#fff" stroke-width="1.3" fill="none"/><path d="M288.13 273.2 V304.2 H256.83" stroke="#c4c4c4" stroke-width="1" fill="none"/><path d="M289.08 272.2 V305.15 H255.83" stroke="#9c9c9c" stroke-width="1.1" fill="none"/><path d="M259.13 302.4 V275.5 H286.03" stroke="#b4b4b4" stroke-width="0.8" fill="none"/><rect x="259.43" y="275.8" width="26.6" height="26.6" fill="#6666ff"/><path d="M285.68 276.1 V302.05 H259.73" stroke="#2c2c58" stroke-width="0.9" fill="none"/><rect x="259.43" y="281.143" width="26.1" height="0.95" fill="#141438"/><rect x="273.445" y="275.8" width="0.95" height="26.1" fill="#141438"/><rect x="259.43" y="279.843" width="26.1" height="1.4" fill="#00f400"/><rect x="272.145" y="275.8" width="1.4" height="26.1" fill="#00f400"/><rect x="294.56" y="272" width="34" height="33.7" fill="#ebebeb"/><path d="M295.21 304.7 V272.65 H327.56" stroke="#fff" stroke-width="1.3" fill="none"/><path d="M327.06 273.2 V304.2 H295.76" stroke="#c4c4c4" stroke-width="1" fill="none"/><path d="M328.01 272.2 V305.15 H294.76" stroke="#9c9c9c" stroke-width="1.1" fill="none"/><path d="M298.06 302.4 V275.5 H324.96" stroke="#b4b4b4" stroke-width="0.8" fill="none"/><rect x="298.36" y="275.8" width="26.6" height="26.6" fill="#6666ff"/><path d="M324.61 276.1 V302.05 H298.66" stroke="#2c2c58" stroke-width="0.9" fill="none"/><rect x="298.36" y="281.143" width="26.1" height="0.95" fill="#141438"/><rect x="307.906" y="275.8" width="0.95" height="26.1" fill="#141438"/><rect x="317.349" y="275.8" width="0.95" height="26.1" fill="#141438"/><rect x="298.36" y="279.843" width="26.1" height="1.4" fill="#00f400"/><rect x="306.606" y="275.8" width="1.4" height="26.1" fill="#00f400"/><rect x="316.049" y="275.8" width="1.4" height="26.1" fill="#00f400"/><rect x="333.49" y="272" width="34" height="33.7" fill="#ebebeb"/><path d="M334.14 304.7 V272.65 H366.49" stroke="#fff" stroke-width="1.3" fill="none"/><path d="M365.99 273.2 V304.2 H334.69" stroke="#c4c4c4" stroke-width="1" fill="none"/><path d="M366.94 272.2 V305.15 H333.69" stroke="#9c9c9c" stroke-width="1.1" fill="none"/><path d="M336.99 302.4 V275.5 H363.89" stroke="#b4b4b4" stroke-width="0.8" fill="none"/><rect x="337.29" y="275.8" width="26.6" height="26.6" fill="#6666ff"/><path d="M363.54 276.1 V302.05 H337.59" stroke="#2c2c58" stroke-width="0.9" fill="none"/><rect x="337.29" y="281.143" width="26.1" height="0.95" fill="#141438"/><rect x="337.29" y="298.194" width="26.1" height="0.95" fill="#141438"/><rect x="337.29" y="279.843" width="26.1" height="1.4" fill="#00f400"/><rect x="337.29" y="296.894" width="26.1" height="1.4" fill="#00f400"/><rect x="372.42" y="272" width="34" height="33.7" fill="#ebebeb"/><path d="M373.07 304.7 V272.65 H405.42" stroke="#fff" stroke-width="1.3" fill="none"/><path d="M404.92 273.2 V304.2 H373.62" stroke="#c4c4c4" stroke-width="1" fill="none"/><path d="M405.87 272.2 V305.15 H372.62" stroke="#9c9c9c" stroke-width="1.1" fill="none"/><path d="M375.92 302.4 V275.5 H402.82" stroke="#b4b4b4" stroke-width="0.8" fill="none"/><rect x="376.22" y="275.8" width="26.6" height="26.6" fill="#6666ff"/><path d="M402.47 276.1 V302.05 H376.52" stroke="#2c2c58" stroke-width="0.9" fill="none"/><rect x="376.22" y="281.143" width="26.1" height="0.95" fill="#141438"/><rect x="376.22" y="298.194" width="26.1" height="0.95" fill="#141438"/><rect x="390.235" y="275.8" width="0.95" height="26.1" fill="#141438"/><rect x="376.22" y="279.843" width="26.1" height="1.4" fill="#00f400"/><rect x="376.22" y="296.894" width="26.1" height="1.4" fill="#00f400"/><rect x="388.935" y="275.8" width="1.4" height="26.1" fill="#00f400"/><rect x="411.35" y="272" width="34" height="33.7" fill="#ebebeb"/><path d="M412 304.7 V272.65 H444.35" stroke="#fff" stroke-width="1.3" fill="none"/><path d="M443.85 273.2 V304.2 H412.55" stroke="#c4c4c4" stroke-width="1" fill="none"/><path d="M444.8 272.2 V305.15 H411.55" stroke="#9c9c9c" stroke-width="1.1" fill="none"/><path d="M414.85 302.4 V275.5 H441.75" stroke="#b4b4b4" stroke-width="0.8" fill="none"/><rect x="415.15" y="275.8" width="26.6" height="26.6" fill="#6666ff"/><path d="M441.4 276.1 V302.05 H415.45" stroke="#2c2c58" stroke-width="0.9" fill="none"/><rect x="415.15" y="281.143" width="26.1" height="0.95" fill="#141438"/><rect x="415.15" y="298.194" width="26.1" height="0.95" fill="#141438"/><rect x="424.696" y="275.8" width="0.95" height="26.1" fill="#141438"/><rect x="434.139" y="275.8" width="0.95" height="26.1" fill="#141438"/><rect x="415.15" y="279.843" width="26.1" height="1.4" fill="#00f400"/><rect x="415.15" y="296.894" width="26.1" height="1.4" fill="#00f400"/><rect x="423.396" y="275.8" width="1.4" height="26.1" fill="#00f400"/><rect x="432.839" y="275.8" width="1.4" height="26.1" fill="#00f400"/><rect x="450.28" y="272" width="34" height="33.7" fill="#ebebeb"/><path d="M450.93 304.7 V272.65 H483.28" stroke="#fff" stroke-width="1.3" fill="none"/><path d="M482.78 273.2 V304.2 H451.48" stroke="#c4c4c4" stroke-width="1" fill="none"/><path d="M483.73 272.2 V305.15 H450.48" stroke="#9c9c9c" stroke-width="1.1" fill="none"/><path d="M453.78 302.4 V275.5 H480.68" stroke="#b4b4b4" stroke-width="0.8" fill="none"/><rect x="454.08" y="275.8" width="26.6" height="26.6" fill="#6666ff"/><path d="M480.33 276.1 V302.05 H454.38" stroke="#2c2c58" stroke-width="0.9" fill="none"/><rect x="454.08" y="281.143" width="26.1" height="0.95" fill="#141438"/><rect x="454.08" y="294.39" width="26.1" height="0.95" fill="#141438"/><rect x="454.08" y="298.194" width="26.1" height="0.95" fill="#141438"/><rect x="454.08" y="279.843" width="26.1" height="1.4" fill="#00f400"/><rect x="454.08" y="293.09" width="26.1" height="1.4" fill="#00f400"/><rect x="454.08" y="296.894" width="26.1" height="1.4" fill="#00f400"/><rect x="489.21" y="272" width="34" height="33.7" fill="#ebebeb"/><path d="M489.86 304.7 V272.65 H522.21" stroke="#fff" stroke-width="1.3" fill="none"/><path d="M521.71 273.2 V304.2 H490.41" stroke="#c4c4c4" stroke-width="1" fill="none"/><path d="M522.66 272.2 V305.15 H489.41" stroke="#9c9c9c" stroke-width="1.1" fill="none"/><path d="M492.71 302.4 V275.5 H519.61" stroke="#b4b4b4" stroke-width="0.8" fill="none"/><rect x="493.01" y="275.8" width="26.6" height="26.6" fill="#6666ff"/><path d="M519.26 276.1 V302.05 H493.31" stroke="#2c2c58" stroke-width="0.9" fill="none"/><rect x="493.01" y="281.143" width="26.1" height="0.95" fill="#141438"/><rect x="493.01" y="294.39" width="26.1" height="0.95" fill="#141438"/><rect x="493.01" y="298.194" width="26.1" height="0.95" fill="#141438"/><rect x="507.025" y="275.8" width="0.95" height="26.1" fill="#141438"/><rect x="493.01" y="279.843" width="26.1" height="1.4" fill="#00f400"/><rect x="493.01" y="293.09" width="26.1" height="1.4" fill="#00f400"/><rect x="493.01" y="296.894" width="26.1" height="1.4" fill="#00f400"/><rect x="505.725" y="275.8" width="1.4" height="26.1" fill="#00f400"/><rect x="528.14" y="272" width="34" height="33.7" fill="#ebebeb"/><path d="M528.79 304.7 V272.65 H561.14" stroke="#fff" stroke-width="1.3" fill="none"/><path d="M560.64 273.2 V304.2 H529.34" stroke="#c4c4c4" stroke-width="1" fill="none"/><path d="M561.59 272.2 V305.15 H528.34" stroke="#9c9c9c" stroke-width="1.1" fill="none"/><path d="M531.64 302.4 V275.5 H558.54" stroke="#b4b4b4" stroke-width="0.8" fill="none"/><rect x="531.94" y="275.8" width="26.6" height="26.6" fill="#6666ff"/><path d="M558.19 276.1 V302.05 H532.24" stroke="#2c2c58" stroke-width="0.9" fill="none"/><rect x="531.94" y="281.143" width="26.1" height="0.95" fill="#141438"/><rect x="531.94" y="294.39" width="26.1" height="0.95" fill="#141438"/><rect x="531.94" y="298.194" width="26.1" height="0.95" fill="#141438"/><rect x="541.486" y="275.8" width="0.95" height="26.1" fill="#141438"/><rect x="550.929" y="275.8" width="0.95" height="26.1" fill="#141438"/><rect x="531.94" y="279.843" width="26.1" height="1.4" fill="#00f400"/><rect x="531.94" y="293.09" width="26.1" height="1.4" fill="#00f400"/><rect x="531.94" y="296.894" width="26.1" height="1.4" fill="#00f400"/><rect x="540.186" y="275.8" width="1.4" height="26.1" fill="#00f400"/><rect x="549.629" y="275.8" width="1.4" height="26.1" fill="#00f400"/><rect x="216.7" y="309.9" width="34" height="33.7" fill="#ebebeb"/><path d="M217.35 342.6 V310.55 H249.7" stroke="#fff" stroke-width="1.3" fill="none"/><path d="M249.2 311.1 V342.1 H217.9" stroke="#c4c4c4" stroke-width="1" fill="none"/><path d="M250.15 310.1 V343.05 H216.9" stroke="#9c9c9c" stroke-width="1.1" fill="none"/><path d="M220.2 340.3 V313.4 H247.1" stroke="#b4b4b4" stroke-width="0.8" fill="none"/><rect x="220.5" y="313.7" width="26.6" height="26.6" fill="#6666ff"/><path d="M246.75 314 V339.95 H220.8" stroke="#2c2c58" stroke-width="0.9" fill="none"/><rect x="220.5" y="319.043" width="26.1" height="0.95" fill="#141438"/><rect x="220.5" y="322.98" width="26.1" height="0.95" fill="#141438"/><rect x="220.5" y="317.743" width="26.1" height="1.4" fill="#00f400"/><rect x="220.5" y="321.68" width="26.1" height="1.4" fill="#00f400"/><rect x="255.63" y="309.9" width="34" height="33.7" fill="#ebebeb"/><path d="M256.28 342.6 V310.55 H288.63" stroke="#fff" stroke-width="1.3" fill="none"/><path d="M288.13 311.1 V342.1 H256.83" stroke="#c4c4c4" stroke-width="1" fill="none"/><path d="M289.08 310.1 V343.05 H255.83" stroke="#9c9c9c" stroke-width="1.1" fill="none"/><path d="M259.13 340.3 V313.4 H286.03" stroke="#b4b4b4" stroke-width="0.8" fill="none"/><rect x="259.43" y="313.7" width="26.6" height="26.6" fill="#6666ff"/><path d="M285.68 314 V339.95 H259.73" stroke="#2c2c58" stroke-width="0.9" fill="none"/><rect x="259.43" y="319.043" width="26.1" height="0.95" fill="#141438"/><rect x="259.43" y="322.98" width="26.1" height="0.95" fill="#141438"/><rect x="273.445" y="313.7" width="0.95" height="26.1" fill="#141438"/><rect x="259.43" y="317.743" width="26.1" height="1.4" fill="#00f400"/><rect x="259.43" y="321.68" width="26.1" height="1.4" fill="#00f400"/><rect x="272.145" y="313.7" width="1.4" height="26.1" fill="#00f400"/><rect x="294.56" y="309.9" width="34" height="33.7" fill="#ebebeb"/><path d="M295.21 342.6 V310.55 H327.56" stroke="#fff" stroke-width="1.3" fill="none"/><path d="M327.06 311.1 V342.1 H295.76" stroke="#c4c4c4" stroke-width="1" fill="none"/><path d="M328.01 310.1 V343.05 H294.76" stroke="#9c9c9c" stroke-width="1.1" fill="none"/><path d="M298.06 340.3 V313.4 H324.96" stroke="#b4b4b4" stroke-width="0.8" fill="none"/><rect x="298.36" y="313.7" width="26.6" height="26.6" fill="#6666ff"/><path d="M324.61 314 V339.95 H298.66" stroke="#2c2c58" stroke-width="0.9" fill="none"/><rect x="298.36" y="319.043" width="26.1" height="0.95" fill="#141438"/><rect x="298.36" y="322.98" width="26.1" height="0.95" fill="#141438"/><rect x="307.906" y="313.7" width="0.95" height="26.1" fill="#141438"/><rect x="317.349" y="313.7" width="0.95" height="26.1" fill="#141438"/><rect x="298.36" y="317.743" width="26.1" height="1.4" fill="#00f400"/><rect x="298.36" y="321.68" width="26.1" height="1.4" fill="#00f400"/><rect x="306.606" y="313.7" width="1.4" height="26.1" fill="#00f400"/><rect x="316.049" y="313.7" width="1.4" height="26.1" fill="#00f400"/><rect x="333.49" y="309.9" width="34" height="33.7" fill="#ebebeb"/><path d="M334.14 342.6 V310.55 H366.49" stroke="#fff" stroke-width="1.3" fill="none"/><path d="M365.99 311.1 V342.1 H334.69" stroke="#c4c4c4" stroke-width="1" fill="none"/><path d="M366.94 310.1 V343.05 H333.69" stroke="#9c9c9c" stroke-width="1.1" fill="none"/><path d="M336.99 340.3 V313.4 H363.89" stroke="#b4b4b4" stroke-width="0.8" fill="none"/><rect x="337.29" y="313.7" width="26.6" height="26.6" fill="#6666ff"/><path d="M363.54 314 V339.95 H337.59" stroke="#2c2c58" stroke-width="0.9" fill="none"/><rect x="337.29" y="319.043" width="26.1" height="0.95" fill="#141438"/><rect x="337.29" y="322.98" width="26.1" height="0.95" fill="#141438"/><rect x="337.29" y="336.094" width="26.1" height="0.95" fill="#141438"/><rect x="337.29" y="317.743" width="26.1" height="1.4" fill="#00f400"/><rect x="337.29" y="321.68" width="26.1" height="1.4" fill="#00f400"/><rect x="337.29" y="334.794" width="26.1" height="1.4" fill="#00f400"/><rect x="372.42" y="309.9" width="34" height="33.7" fill="#ebebeb"/><path d="M373.07 342.6 V310.55 H405.42" stroke="#fff" stroke-width="1.3" fill="none"/><path d="M404.92 311.1 V342.1 H373.62" stroke="#c4c4c4" stroke-width="1" fill="none"/><path d="M405.87 310.1 V343.05 H372.62" stroke="#9c9c9c" stroke-width="1.1" fill="none"/><path d="M375.92 340.3 V313.4 H402.82" stroke="#b4b4b4" stroke-width="0.8" fill="none"/><rect x="376.22" y="313.7" width="26.6" height="26.6" fill="#6666ff"/><path d="M402.47 314 V339.95 H376.52" stroke="#2c2c58" stroke-width="0.9" fill="none"/><rect x="376.22" y="319.043" width="26.1" height="0.95" fill="#141438"/><rect x="376.22" y="322.98" width="26.1" height="0.95" fill="#141438"/><rect x="376.22" y="336.094" width="26.1" height="0.95" fill="#141438"/><rect x="390.235" y="313.7" width="0.95" height="26.1" fill="#141438"/><rect x="376.22" y="317.743" width="26.1" height="1.4" fill="#00f400"/><rect x="376.22" y="321.68" width="26.1" height="1.4" fill="#00f400"/><rect x="376.22" y="334.794" width="26.1" height="1.4" fill="#00f400"/><rect x="388.935" y="313.7" width="1.4" height="26.1" fill="#00f400"/><rect x="411.35" y="309.9" width="34" height="33.7" fill="#ebebeb"/><path d="M412 342.6 V310.55 H444.35" stroke="#fff" stroke-width="1.3" fill="none"/><path d="M443.85 311.1 V342.1 H412.55" stroke="#c4c4c4" stroke-width="1" fill="none"/><path d="M444.8 310.1 V343.05 H411.55" stroke="#9c9c9c" stroke-width="1.1" fill="none"/><path d="M414.85 340.3 V313.4 H441.75" stroke="#b4b4b4" stroke-width="0.8" fill="none"/><rect x="415.15" y="313.7" width="26.6" height="26.6" fill="#6666ff"/><path d="M441.4 314 V339.95 H415.45" stroke="#2c2c58" stroke-width="0.9" fill="none"/><rect x="415.15" y="319.043" width="26.1" height="0.95" fill="#141438"/><rect x="415.15" y="322.98" width="26.1" height="0.95" fill="#141438"/><rect x="415.15" y="336.094" width="26.1" height="0.95" fill="#141438"/><rect x="424.696" y="313.7" width="0.95" height="26.1" fill="#141438"/><rect x="434.139" y="313.7" width="0.95" height="26.1" fill="#141438"/><rect x="415.15" y="317.743" width="26.1" height="1.4" fill="#00f400"/><rect x="415.15" y="321.68" width="26.1" height="1.4" fill="#00f400"/><rect x="415.15" y="334.794" width="26.1" height="1.4" fill="#00f400"/><rect x="423.396" y="313.7" width="1.4" height="26.1" fill="#00f400"/><rect x="432.839" y="313.7" width="1.4" height="26.1" fill="#00f400"/><rect x="450.28" y="309.9" width="34" height="33.7" fill="#ebebeb"/><path d="M450.93 342.6 V310.55 H483.28" stroke="#fff" stroke-width="1.3" fill="none"/><path d="M482.78 311.1 V342.1 H451.48" stroke="#c4c4c4" stroke-width="1" fill="none"/><path d="M483.73 310.1 V343.05 H450.48" stroke="#9c9c9c" stroke-width="1.1" fill="none"/><path d="M453.78 340.3 V313.4 H480.68" stroke="#b4b4b4" stroke-width="0.8" fill="none"/><rect x="454.08" y="313.7" width="26.6" height="26.6" fill="#6666ff"/><path d="M480.33 314 V339.95 H454.38" stroke="#2c2c58" stroke-width="0.9" fill="none"/><rect x="454.08" y="319.043" width="26.1" height="0.95" fill="#141438"/><rect x="454.08" y="322.98" width="26.1" height="0.95" fill="#141438"/><rect x="454.08" y="332.29" width="26.1" height="0.95" fill="#141438"/><rect x="454.08" y="336.094" width="26.1" height="0.95" fill="#141438"/><rect x="454.08" y="317.743" width="26.1" height="1.4" fill="#00f400"/><rect x="454.08" y="321.68" width="26.1" height="1.4" fill="#00f400"/><rect x="454.08" y="330.99" width="26.1" height="1.4" fill="#00f400"/><rect x="454.08" y="334.794" width="26.1" height="1.4" fill="#00f400"/><rect x="489.21" y="309.9" width="34" height="33.7" fill="#ebebeb"/><path d="M489.86 342.6 V310.55 H522.21" stroke="#fff" stroke-width="1.3" fill="none"/><path d="M521.71 311.1 V342.1 H490.41" stroke="#c4c4c4" stroke-width="1" fill="none"/><path d="M522.66 310.1 V343.05 H489.41" stroke="#9c9c9c" stroke-width="1.1" fill="none"/><path d="M492.71 340.3 V313.4 H519.61" stroke="#b4b4b4" stroke-width="0.8" fill="none"/><rect x="493.01" y="313.7" width="26.6" height="26.6" fill="#6666ff"/><path d="M519.26 314 V339.95 H493.31" stroke="#2c2c58" stroke-width="0.9" fill="none"/><rect x="493.01" y="319.043" width="26.1" height="0.95" fill="#141438"/><rect x="493.01" y="322.98" width="26.1" height="0.95" fill="#141438"/><rect x="493.01" y="332.29" width="26.1" height="0.95" fill="#141438"/><rect x="493.01" y="336.094" width="26.1" height="0.95" fill="#141438"/><rect x="507.025" y="313.7" width="0.95" height="26.1" fill="#141438"/><rect x="493.01" y="317.743" width="26.1" height="1.4" fill="#00f400"/><rect x="493.01" y="321.68" width="26.1" height="1.4" fill="#00f400"/><rect x="493.01" y="330.99" width="26.1" height="1.4" fill="#00f400"/><rect x="493.01" y="334.794" width="26.1" height="1.4" fill="#00f400"/><rect x="505.725" y="313.7" width="1.4" height="26.1" fill="#00f400"/><rect x="528.14" y="309.9" width="34" height="33.7" fill="#ebebeb"/><path d="M528.79 342.6 V310.55 H561.14" stroke="#fff" stroke-width="1.3" fill="none"/><path d="M560.64 311.1 V342.1 H529.34" stroke="#c4c4c4" stroke-width="1" fill="none"/><path d="M561.59 310.1 V343.05 H528.34" stroke="#9c9c9c" stroke-width="1.1" fill="none"/><path d="M531.64 340.3 V313.4 H558.54" stroke="#b4b4b4" stroke-width="0.8" fill="none"/><rect x="531.94" y="313.7" width="26.6" height="26.6" fill="#6666ff"/><path d="M558.19 314 V339.95 H532.24" stroke="#2c2c58" stroke-width="0.9" fill="none"/><rect x="531.94" y="319.043" width="26.1" height="0.95" fill="#141438"/><rect x="531.94" y="322.98" width="26.1" height="0.95" fill="#141438"/><rect x="531.94" y="332.29" width="26.1" height="0.95" fill="#141438"/><rect x="531.94" y="336.094" width="26.1" height="0.95" fill="#141438"/><rect x="541.486" y="313.7" width="0.95" height="26.1" fill="#141438"/><rect x="550.929" y="313.7" width="0.95" height="26.1" fill="#141438"/><rect x="531.94" y="317.743" width="26.1" height="1.4" fill="#00f400"/><rect x="531.94" y="321.68" width="26.1" height="1.4" fill="#00f400"/><rect x="531.94" y="330.99" width="26.1" height="1.4" fill="#00f400"/><rect x="531.94" y="334.794" width="26.1" height="1.4" fill="#00f400"/><rect x="540.186" y="313.7" width="1.4" height="26.1" fill="#00f400"/><rect x="549.629" y="313.7" width="1.4" height="26.1" fill="#00f400"/></svg><div class="t" style="left:211px;top:218.6px;background:#f0f0f0;padding:0 0.5px;font-size:7.6px">配置<span style="letter-spacing:-0.7px">パターン</span></div></div>
<div class="a" id="status"><div class="t" style="left:1px;top:2.6px"><span style="letter-spacing:-1.42px">ﾍﾙﾌﾟ を表示するには</span> [F1] <span style="letter-spacing:-1.42px">を押してください。</span></div><svg width="638" height="12" viewBox="1 469 638 12" fill="none"><path d="M318.2 481 V470.7 H626.5" stroke="#c4c4c4" stroke-width="0.9"/><path d="M627 481 V471.2" stroke="#fff" stroke-width="0.9"/><path d="M1 480.4 H639" stroke="#fbfbfb" stroke-width="0.8"/><path d="M631.8 480.6 L638.6 473.8 M634 480.6 L638.6 476 M636.2 480.6 L638.6 478.2" stroke="#8c8c8c" stroke-width="0.9" stroke-dasharray="0.9 0.7"/></svg></div>
</div>
</div>
</body></html>
